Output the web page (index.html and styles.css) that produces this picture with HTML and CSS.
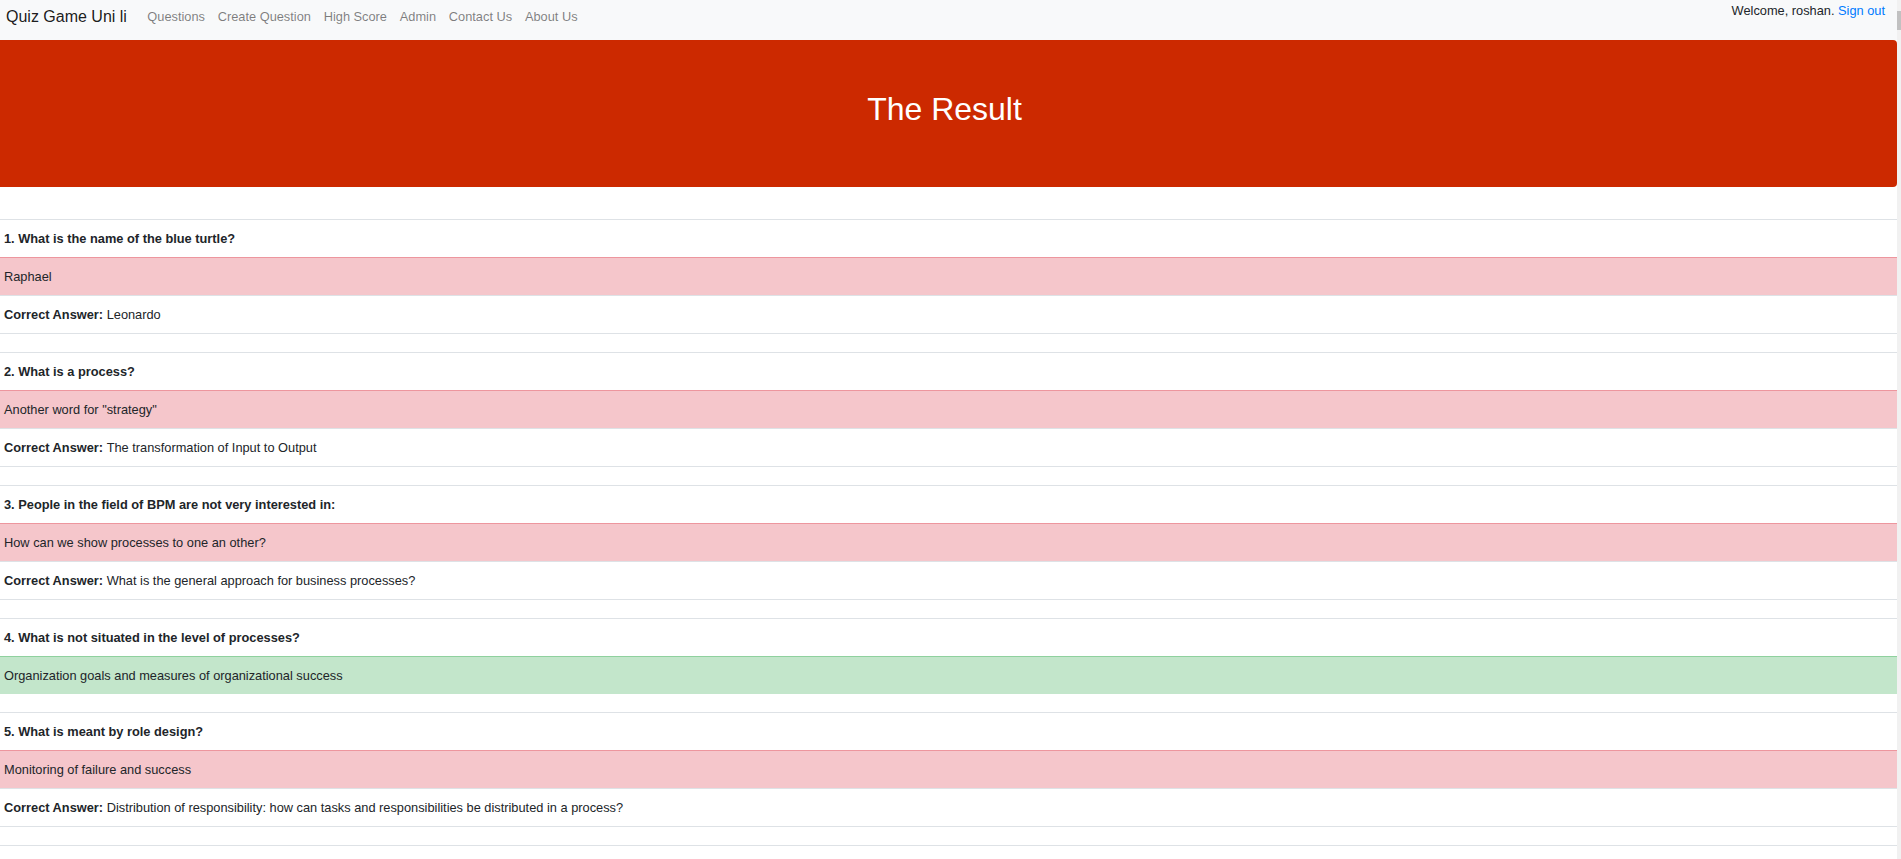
FILE: index.html
```html
<!DOCTYPE html>
<html lang="en">
<head>
<meta charset="utf-8">
<title>Quiz Game Uni li - Result</title>
<link rel="stylesheet" href="styles.css">
</head>
<body>
<nav class="navbar">
  <a class="brand" href="#">Quiz Game Uni li</a>
  <ul class="nav">
    <li><a href="#">Questions</a></li>
    <li><a href="#">Create Question</a></li>
    <li><a href="#">High Score</a></li>
    <li><a href="#">Admin</a></li>
    <li><a href="#">Contact Us</a></li>
    <li><a href="#">About Us</a></li>
  </ul>
  <div class="user">Welcome, roshan. <a href="#">Sign out</a></div>
</nav>

<header class="jumbotron">
  <h1>The Result</h1>
</header>

<main class="results">
  <section class="qtable">
    <div class="row q">1. What is the name of the blue turtle?</div>
    <div class="row wrong">Raphael</div>
    <div class="row correct"><b>Correct Answer:</b>&nbsp;Leonardo</div>
  </section>
  <section class="qtable">
    <div class="row q">2. What is a process?</div>
    <div class="row wrong">Another word for "strategy"</div>
    <div class="row correct"><b>Correct Answer:</b>&nbsp;The transformation of Input to Output</div>
  </section>
  <section class="qtable">
    <div class="row q">3. People in the field of BPM are not very interested in:</div>
    <div class="row wrong">How can we show processes to one an other?</div>
    <div class="row correct"><b>Correct Answer:</b>&nbsp;What is the general approach for business processes?</div>
  </section>
  <section class="qtable">
    <div class="row q">4. What is not situated in the level of processes?</div>
    <div class="row right">Organization goals and measures of organizational success</div>
  </section>
  <section class="qtable">
    <div class="row q">5. What is meant by role design?</div>
    <div class="row wrong">Monitoring of failure and success</div>
    <div class="row correct"><b>Correct Answer:</b>&nbsp;Distribution of responsibility: how can tasks and responsibilities be distributed in a process?</div>
  </section>
  <div class="tail"></div>
</main>
</body>
</html>
```

FILE: styles.css
```css
html {
  background: linear-gradient(to bottom, #f1f1f1 0, #f1f1f1 11px, #c1c1c1 11px, #c1c1c1 30px, #f1f1f1 30px);
  overflow: hidden;
}

body {
  margin: 0 4px 0 0;
  background: #fff;
  font-family: "Liberation Sans", Arial, sans-serif;
  font-size: 12.8px;
  line-height: 1.5;
  color: #212529;
  overflow: hidden;
}

a { text-decoration: none; }

.navbar {
  display: flex;
  align-items: flex-start;
  height: 40px;
  box-sizing: border-box;
  padding: 0 12px 0 6px;
  background: #f8f9fa;
}

.brand {
  font-size: 16px;
  line-height: 24px;
  padding-top: 5px;
  color: rgba(0, 0, 0, 0.9);
  margin-right: 14px;
}

.nav {
  display: flex;
  list-style: none;
  margin: 0;
  padding: 0;
  padding-top: 7px;
}

.nav a {
  display: block;
  padding: 0 6.4px;
  color: rgba(0, 0, 0, 0.5);
}

.user {
  margin-left: auto;
  padding-top: 1px;
}

.user a { color: #007bff; }

.jumbotron {
  height: 147px;
  box-sizing: border-box;
  background: #cc2900;
  color: #fff;
  border-radius: 4px;
  margin: 0 0 32px -8px;
  padding-top: 50px;
  text-align: center;
}

.jumbotron h1 {
  margin: 0;
  font-size: 32px;
  font-weight: 400;
  line-height: 38px;
}

.qtable {
  margin-bottom: 18px;
}

.qtable.short {
  margin-bottom: 19px;
}

.row {
  display: flex;
  align-items: center;
  height: 37px;
  padding: 0 4px;
  border-top: 1px solid #dee2e6;
  white-space: pre;
}

.row.q { font-weight: bold; }

.row.wrong {
  background: #f5c6cb;
  border-top-color: #ed969e;
}

.row.right {
  background: #c3e6cb;
  border-top-color: #8fd19e;
}

.row.correct {
  border-bottom: 1px solid #dee2e6;
}

.tail {
  height: 40px;
  border-top: 1px solid #dee2e6;
}
```
